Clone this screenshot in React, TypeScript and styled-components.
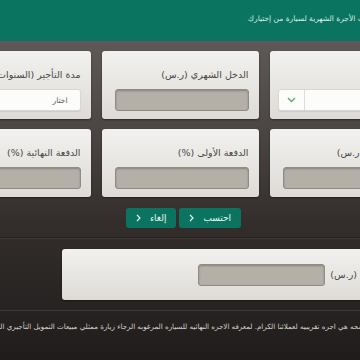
import React from 'react';
import styled, { createGlobalStyle } from 'styled-components';

const GlobalStyle = createGlobalStyle`
  html, body {
    margin: 0;
    padding: 0;
  }
  body {
    width: 360px;
    height: 360px;
    overflow: hidden;
    background: linear-gradient(180deg, #67625f 0%, #4c4745 35%, #332e2c 62%, #1f1c1b 100%);
    font-family: "DejaVu Sans", sans-serif;
  }
`;

const Page = styled.div`
  direction: rtl;
  width: 360px;
  height: 360px;
  overflow: hidden;
  display: flex;
  flex-direction: column;
  align-items: center;
`;

const Header = styled.header`
  align-self: stretch;
  height: 41px;
  background: #0b7461;
  display: flex;
  justify-content: center;
`;

const HeaderInner = styled.div`
  width: 493px;
  flex-shrink: 0;
  box-sizing: border-box;
  padding-right: 48px;
  display: flex;
  align-items: center;
`;

const HeaderText = styled.p`
  margin: 0 0 5px;
  font-size: 7.5px;
  color: #d7ece4;
  white-space: nowrap;
`;

const Container = styled.div<{ $top?: number }>`
  width: 493px;
  flex-shrink: 0;
  margin-top: ${p => p.$top ?? 0}px;
`;

const Grid = styled.div`
  display: grid;
  grid-template-columns: repeat(3, 157px);
  gap: 10px 11px;
`;

const Card = styled.div`
  height: 68px;
  box-sizing: border-box;
  padding: 16px 10px 0 13px;
  background: linear-gradient(180deg, #f2f1ef 0%, #dedbd6 100%);
  border-radius: 3px;
  box-shadow: 0 1px 2px rgba(0, 0, 0, 0.45);
`;

const Label = styled.div`
  height: 16px;
  line-height: 16px;
  margin-bottom: 6px;
  font-size: 9.5px;
  color: #4a4846;
  white-space: nowrap;
`;

const Field = styled.input`
  display: block;
  width: 100%;
  height: 22px;
  box-sizing: border-box;
  margin: 0;
  background: #b4afa7;
  border: 1px solid #8f8b85;
  border-radius: 3px;
  box-shadow: inset 0 1px 2px rgba(0, 0, 0, 0.25);
  outline: none;
`;

const Select = styled.div<{ $wide?: boolean }>`
  height: 22px;
  box-sizing: border-box;
  margin-left: ${p => (p.$wide ? -5 : 0)}px;
  background: #fcfcfb;
  border: 1px solid #d9d7d3;
  border-radius: 3px;
  box-shadow: 0 1px 1px rgba(0, 0, 0, 0.08);
  display: flex;
  align-items: center;
  padding-right: 12px;
  font-size: 7.5px;
  color: #5a5856;
`;

const SelectText = styled.span`
  flex: 1;
`;

const Caret = styled.span`
  width: 25px;
  align-self: stretch;
  border-right: 1px solid #dedcd8;
  display: flex;
  align-items: center;
  justify-content: center;
`;

const Actions = styled.div`
  margin-top: 11px;
  padding-left: 7px;
  display: flex;
  justify-content: center;
  gap: 3px;
`;

const Button = styled.button`
  height: 20px;
  box-sizing: border-box;
  padding: 0 10px;
  border: 0;
  border-radius: 3px;
  background: #0b7461;
  color: #e9f4f0;
  font-family: "DejaVu Sans", sans-serif;
  font-size: 9px;
  display: flex;
  align-items: center;
  gap: 9px;
`;

const Divider = styled.div<{ $top: number }>`
  align-self: stretch;
  margin-top: ${p => p.$top}px;
  height: 0;
  border-top: 1px solid #272321;
  border-bottom: 1px solid #3c3836;
`;

const ResultCard = styled.div`
  width: 365px;
  height: 51px;
  box-sizing: border-box;
  padding: 15px 8px 0 10px;
  background: linear-gradient(180deg, #f2f1ef 0%, #dedbd6 100%);
  border-radius: 3px;
  box-shadow: 0 1px 2px rgba(0, 0, 0, 0.45);
  display: flex;
  align-items: flex-start;
  gap: 5px;
`;

const ResultLabel = styled.div`
  line-height: 22px;
  font-size: 9.5px;
  color: #4a4846;
  white-space: nowrap;
`;

const ResultField = styled(Field)`
  width: 127px;
`;

const Note = styled.p`
  margin: 9px 0 0;
  padding-right: 30px;
  line-height: 14px;
  font-size: 7.1px;
  color: #d6d2cc;
  white-space: nowrap;
`;

const ChevronDown = () => (
  <svg width="9" height="6" viewBox="0 0 9 6">
    <polyline points="1,1 4.5,4.5 8,1" fill="none" stroke="#5aa86a" strokeWidth="1.3" />
  </svg>
);

const ChevronRight = () => (
  <svg width="5" height="8" viewBox="0 0 5 8">
    <polyline points="1,1 4,4 1,7" fill="none" stroke="#e9f4f0" strokeWidth="1.2" />
  </svg>
);

const inputs: { label: string; kind: 'field' | 'select' | 'dropdown' }[] = [
  { label: 'نوع السيارة', kind: 'dropdown' },
  { label: 'الدخل الشهري (ر.س)', kind: 'field' },
  { label: 'مدة التأجير (السنوات)', kind: 'select' },
  { label: 'سعر السيارة (ر.س)', kind: 'field' },
  { label: 'الدفعة الأولى (%)', kind: 'field' },
  { label: 'الدفعة النهائية (%)', kind: 'field' },
];

const App: React.FC = () => {
  return (
    <Page>
      <GlobalStyle />
      <Header>
        <HeaderInner>
          <HeaderText>احسب الأجرة الشهرية لسيارة من إختيارك</HeaderText>
        </HeaderInner>
      </Header>
      <Container $top={10}>
        <Grid>
          {inputs.map(item => (
            <Card key={item.label}>
              <Label>{item.label}</Label>
              {item.kind === 'field' && <Field readOnly />}
              {item.kind === 'select' && (
                <Select>
                  <SelectText>اختار</SelectText>
                </Select>
              )}
              {item.kind === 'dropdown' && (
                <Select $wide>
                  <SelectText />
                  <Caret>
                    <ChevronDown />
                  </Caret>
                </Select>
              )}
            </Card>
          ))}
        </Grid>
        <Actions>
          <Button>
            احتسب <ChevronRight />
          </Button>
          <Button>
            إلغاء <ChevronRight />
          </Button>
        </Actions>
      </Container>
      <Divider $top={9} />
      <Container $top={10}>
        <ResultCard>
          <ResultLabel>الأجرة الشهرية (ر.س)</ResultLabel>
          <ResultField readOnly />
        </ResultCard>
      </Container>
      <Divider $top={9} />
      <Container>
        <Note>
          الاجره الموضحه هي اجره تقريبيه لعملائنا الكرام. لمعرفه الاجره النهائيه للسياره المرغوبه الرجاء زيارة ممثلي مبيعات التمويل التأجيري الخاص بنا
        </Note>
      </Container>
    </Page>
  );
};

export default App;
